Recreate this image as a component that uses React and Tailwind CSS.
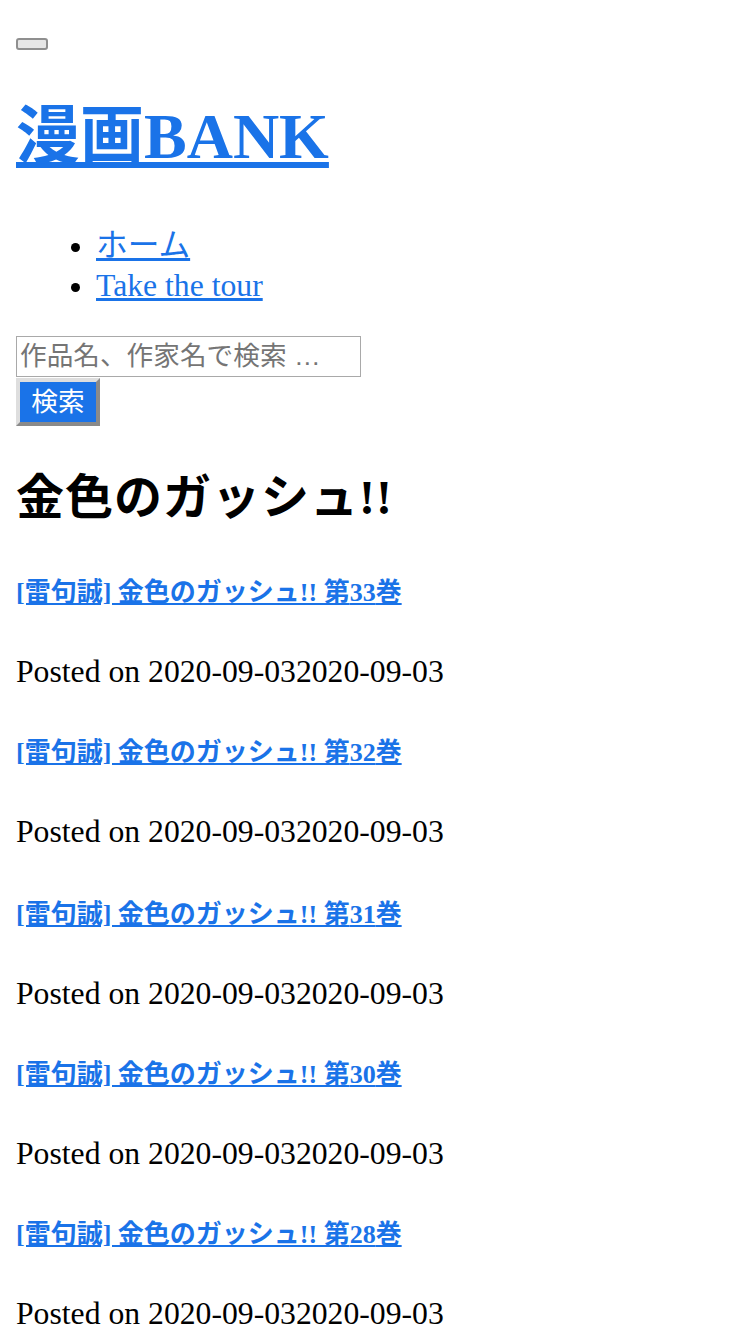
const posts = [
  { vol: "33" },
  { vol: "32" },
  { vol: "31", shift: true },
  { vol: "30" },
  { vol: "28" },
];

const serif = "font-['Liberation_Serif','Noto_Sans_CJK_JP',serif]";

export default function App() {
  return (
    <div className={`${serif} min-h-[1334px] bg-white px-4 text-black`}>
      {/* menu toggle */}
      <div className="h-[52px] pt-[38px]">
        <button className="block h-3 w-8 rounded-[3px] border-2 border-[#8f8f8f] bg-[#e6e6e6]" />
      </div>

      <h1 className="mt-[48px] text-[64px] leading-[74px] font-bold">
        <a href="#" className="text-[#1a73e8] underline">
          漫画BANK
        </a>
      </h1>

      <ul className="mt-[52px] list-disc pl-20 text-[31.7px] leading-[40px]">
        <li>
          <a href="#" className="text-[#1a73e8] underline">
            ホーム
          </a>
        </li>
        <li>
          <a href="#" className="text-[#1a73e8] underline">
            Take the tour
          </a>
        </li>
      </ul>

      <form className="mt-[30px] font-['Liberation_Sans','Noto_Sans_CJK_JP',sans-serif]">
        <input
          type="search"
          placeholder="作品名、作家名で検索 …"
          className="block h-[41px] w-[345px] border border-[#a9a9a9] px-[3px] text-[26.67px] outline-none placeholder:text-[#757575]"
        />
        <button
          type="button"
          className="mt-px block h-12 w-[84px] border-4 border-t-[#dedede] border-l-[#dedede] border-r-[#8a8a8a] border-b-[#8a8a8a] bg-[#1a73e8] text-[26.67px] leading-none text-white"
        >
          検索
        </button>
      </form>

      <h2 className="mt-[44px] text-[48px] leading-[55px] font-bold tracking-[1px]">金色のガッシュ!!</h2>

      {posts.map((p, i) => (
        <div key={p.vol}>
          <h5
            className={`${i === 0 ? "mt-[52px]" : p.shift ? "mt-[49px]" : "mt-[47px]"} text-[26px] leading-[31px] font-bold`}
          >
            <a href="#" className="text-[#1a73e8] underline">
              [雷句誠] 金色のガッシュ!! 第{p.vol}巻
            </a>
          </h5>
          <p className="mt-[45px] text-[31.7px] leading-[37px]">Posted on 2020-09-032020-09-03</p>
        </div>
      ))}
    </div>
  );
}
